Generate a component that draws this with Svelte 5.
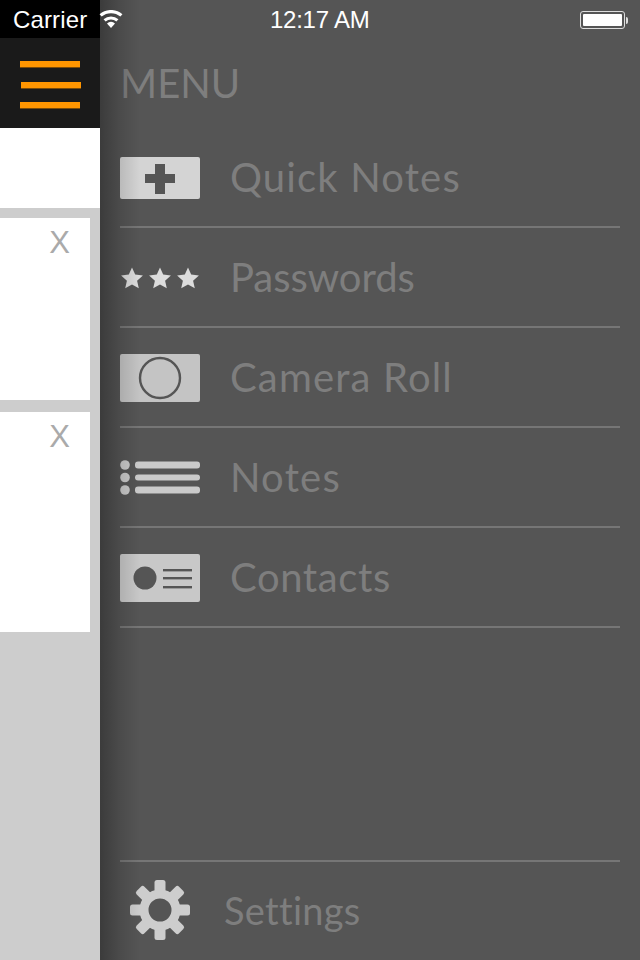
<script lang="ts">
	// tracking per label: Lato's proportions differ a little from the original face
	const items = [
		{ id: 'quick', label: 'Quick Notes', track: 1.15 },
		{ id: 'passwords', label: 'Passwords', track: -0.05 },
		{ id: 'camera', label: 'Camera Roll', track: 1.15 },
		{ id: 'notes', label: 'Notes', track: 1.2 },
		{ id: 'contacts', label: 'Contacts', track: 0.6 },
	];
	const star = 'M11 .5L14.2 7.6 21.9 8.4 16.1 13.7 17.8 21.3 11 17.4 4.2 21.3 5.9 13.7 .1 8.4 7.8 7.6z';
	const teeth = [0, 45, 90, 135, 180, 225, 270, 315];
</script>

<div class="screen">
	<div class="content">
		<div class="status-bg"></div>
		<header class="toolbar">
			<div class="burger"><span></span><span></span><span></span></div>
		</header>
		<div class="list">
			<div class="card first"></div>
			<div class="card second"><span class="close">X</span></div>
			<div class="card third"><span class="close">X</span></div>
		</div>
	</div>

	<aside class="drawer">
		<h1 class="title">MENU</h1>
		<ul class="menu">
			{#each items as item}
				<li class="row">
					<div class="icon">
						{#if item.id === 'quick'}
							<svg width="80" height="42" viewBox="0 0 80 42">
								<rect width="80" height="42" rx="2" fill="#d4d4d4" />
								<path d="M25 17h10V7h10v10h10v9H45v11H35V26H25z" fill="#555" />
							</svg>
						{:else if item.id === 'passwords'}
							<svg width="80" height="22" viewBox="0 0 80 22">
								<path d={star} fill="#dcdcdc" transform="translate(1)" />
								<path d={star} fill="#dcdcdc" transform="translate(29)" />
								<path d={star} fill="#dcdcdc" transform="translate(57)" />
							</svg>
						{:else if item.id === 'camera'}
							<svg width="80" height="48" viewBox="0 0 80 48">
								<rect width="80" height="48" rx="2" fill="#c4c4c4" />
								<circle cx="40" cy="24" r="20" fill="none" stroke="#555" stroke-width="2.4" />
							</svg>
						{:else if item.id === 'notes'}
							<svg width="80" height="36" viewBox="0 0 80 36">
								<circle cx="5" cy="5" r="4.8" fill="#cacaca" />
								<circle cx="5" cy="17.5" r="4.8" fill="#cacaca" />
								<circle cx="5" cy="30" r="4.8" fill="#cacaca" />
								<rect x="15" y="1.5" width="65" height="7" rx="3" fill="#cacaca" />
								<rect x="15" y="14.5" width="65" height="6" rx="3" fill="#cacaca" />
								<rect x="15" y="26.5" width="65" height="7" rx="3" fill="#cacaca" />
							</svg>
						{:else}
							<svg width="80" height="48" viewBox="0 0 80 48">
								<rect width="80" height="48" rx="2" fill="#c8c8c8" />
								<circle cx="25" cy="24" r="11.5" fill="#555" />
								<rect x="43" y="15" width="29" height="2.4" fill="#555" />
								<rect x="43" y="23" width="29" height="2.4" fill="#555" />
								<rect x="43" y="32" width="29" height="2.4" fill="#555" />
							</svg>
						{/if}
					</div>
					<span class="label" style:letter-spacing="{item.track}px">{item.label}</span>
				</li>
			{/each}
		</ul>
		<footer class="settings">
			<svg class="gear" width="60" height="60" viewBox="0 0 60 60">
				{#each teeth as angle}
					<rect x="24.5" y="0" width="11" height="14" rx="2.5" fill="#cdcdcd" transform="rotate({angle} 30 30)" />
				{/each}
				<circle cx="30" cy="30" r="16" fill="none" stroke="#cdcdcd" stroke-width="9" />
			</svg>
			<span class="settings-label">Settings</span>
		</footer>
	</aside>

	<div class="statusbar">
		<div class="status-left">
			<span class="carrier">Carrier</span>
			<svg width="24" height="18" viewBox="0 0 24 18">
				<path d="M12 18l-4-4.6a6 6 0 0 1 8 0z" fill="#fff" />
				<path d="M5.6 10.4a9.8 9.8 0 0 1 12.8 0M1.6 5.4a16 16 0 0 1 20.8 0" fill="none" stroke="#fff" stroke-width="3.2" />
			</svg>
		</div>
		<span class="time">12:17 AM</span>
		<div class="battery"><div class="battery-body"><div class="battery-fill"></div></div><div class="battery-tip"></div></div>
	</div>
</div>

<style>
	:global(body) {
		margin: 0;
	}

	.screen {
		position: relative;
		display: flex;
		width: 640px;
		height: 960px;
		overflow: hidden;
		background: #cdcdcd;
	}

	.content {
		display: flex;
		flex-direction: column;
		flex: 0 0 100px;
	}

	.status-bg {
		height: 38px;
		background: #000;
	}

	.toolbar {
		display: flex;
		align-items: center;
		justify-content: center;
		height: 90px;
		background: #1a1a1a;
	}

	.burger {
		display: flex;
		flex-direction: column;
		gap: 15px;
		margin-top: 3px;
	}

	.burger span {
		display: block;
		width: 60px;
		height: 6px;
		background: #ff9500;
		box-shadow: 0 1px 0 #7a4a08;
	}

	.burger span:nth-child(2) {
		margin-left: 1px;
	}

	.burger span:nth-child(3) {
		margin-top: -1px;
	}

	.list {
		display: flex;
		flex-direction: column;
	}

	.card {
		position: relative;
		background: #fff;
	}

	.first {
		height: 80px;
	}

	.second {
		width: 90px;
		height: 182px;
		margin-top: 10px;
	}

	.third {
		width: 90px;
		height: 220px;
		margin-top: 12px;
	}

	.close {
		position: absolute;
		top: 8px;
		right: 20px;
		font: 31px/34px 'Liberation Sans', sans-serif;
		color: #aaa;
	}

	.drawer {
		position: relative;
		display: flex;
		flex-direction: column;
		flex: 1;
		padding: 0 20px;
		background: #555;
		font-family: Lato, sans-serif;
		color: #7e7e7e;
	}

	/* shadow falls over the icons as well */
	.drawer::before {
		content: '';
		position: absolute;
		top: 0;
		bottom: 0;
		left: 0;
		width: 40px;
		background: linear-gradient(to right, rgba(0, 0, 0, 0.3), rgba(0, 0, 0, 0.12) 20px, rgba(0, 0, 0, 0));
		pointer-events: none;
	}

	.title {
		margin: 59px 0 0;
		height: 69px;
		font-size: 40px;
		line-height: 48px;
		font-weight: 400;
	}

	.menu {
		flex: 1;
		margin: 0;
		padding: 0;
		list-style: none;
	}

	.row {
		display: flex;
		align-items: center;
		height: 98px;
		border-bottom: 2px solid #767676;
	}

	.icon {
		display: flex;
		flex: 0 0 80px;
		margin-top: 2px;
		margin-right: 30px;
	}

	.label {
		font-size: 40px;
		line-height: 48px;
	}

	.settings {
		display: flex;
		align-items: center;
		box-sizing: border-box;
		height: 100px;
		padding-bottom: 2px;
		border-top: 2px solid #767676;
	}

	.gear {
		margin: 0 34px 0 10px;
	}

	.settings-label {
		font-size: 38px;
		line-height: 46px;
		letter-spacing: 0.3px;
	}

	.statusbar {
		position: absolute;
		top: 0;
		left: 0;
		right: 0;
		display: flex;
		align-items: center;
		justify-content: space-between;
		height: 38px;
		padding: 2px 12px 0 13px;
		box-sizing: border-box;
		font: 24px/36px 'Liberation Sans', sans-serif;
		color: #fff;
	}

	.status-left {
		display: flex;
		align-items: center;
		gap: 12px;
		width: 160px;
	}

	.carrier {
		letter-spacing: 0.15px;
	}

	.status-left svg {
		margin-top: -2px;
	}

	.time {
		position: absolute;
		left: 270px;
		letter-spacing: -0.25px;
	}

	.battery {
		display: flex;
		align-items: center;
	}

	.battery-body {
		box-sizing: border-box;
		width: 45px;
		height: 18px;
		padding: 2px;
		border: 1px solid #ddd;
		border-radius: 3px;
	}

	.battery-fill {
		height: 100%;
		background: #fff;
		border-radius: 1px;
	}

	.battery-tip {
		width: 2px;
		height: 7px;
		margin-left: 1px;
		background: #ddd;
		border-radius: 0 2px 2px 0;
	}
</style>
